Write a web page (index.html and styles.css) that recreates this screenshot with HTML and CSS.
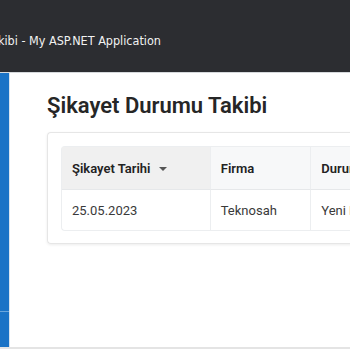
FILE: index.html
```html
<!DOCTYPE html>
<html lang="tr">
<head>
    <meta charset="UTF-8">
    <meta name="viewport" content="width=device-width, initial-scale=1.0">
    <title>Şikayet Durumu Takibi - My ASP.NET Application</title>
    <link rel="stylesheet" href="styles.css">
</head>
<body>

    <header class="topbar">
        <div class="brand">
            <span class="brand-text">Şikayet Durumu Takibi - My ASP.NET Application</span>
        </div>
    </header>

    <div class="page">
        <aside class="sidebar">
            <div class="sidebar-top"></div>
            <div class="sidebar-bottom"></div>
        </aside>

        <main class="content">
            <h1 class="title">Şikayet Durumu Takibi</h1>

            <div class="card">
                <table class="grid">
                    <thead>
                        <tr>
                            <th class="col-date sorted">Şikayet Tarihi <span class="caret"></span></th>
                            <th class="col-firm">Firma</th>
                            <th class="col-state">Durum</th>
                        </tr>
                    </thead>
                    <tbody>
                        <tr>
                            <td>25.05.2023</td>
                            <td>Teknosah</td>
                            <td>Yeni Kayıt</td>
                        </tr>
                    </tbody>
                </table>
            </div>
        </main>
    </div>

</body>
</html>
```

FILE: styles.css
```css
* {
    box-sizing: border-box;
    margin: 0;
    padding: 0;
}

body {
    font-family: 'Roboto', 'Liberation Sans', sans-serif;
    width: 350px;
    height: 350px;
    overflow: hidden;
    background-color: #fff;
    color: #333;
}

.topbar {
    height: 73px;
    background-color: #2c2d31;
    border-bottom: 1px solid #d6d9dc;
    display: flex;
    align-items: center;
}

.brand {
    width: 161px;
    display: flex;
    justify-content: flex-end;
    overflow: hidden;
    white-space: nowrap;
    margin-top: 9px;
}

.brand-text {
    font-family: 'DejaVu Sans Condensed', 'DejaVu Sans', sans-serif;
    font-stretch: condensed;
    font-size: 12.5px;
    color: #f2f2f2;
}

.page {
    display: flex;
    height: 276px;
    border-bottom: 2px solid #e4e4e4;
}

.sidebar {
    width: 10px;
    display: flex;
    flex-direction: column;
    background-color: #1a73c6;
    border-right: 1px solid #d8e4ef;
}

.sidebar-top {
    height: 239px;
    border-bottom: 1px solid #6aa6dc;
}

.content {
    flex: 1;
    padding: 20px 0 0 37px;
    overflow: hidden;
}

.title {
    font-size: 22px;
    font-weight: 600;
    color: #262626;
    line-height: 26px;
    margin-bottom: 13px;
}

.card {
    width: 340px;
    border: 1px solid #e6e6e6;
    border-right: none;
    border-radius: 4px 0 0 4px;
    box-shadow: 0 1px 3px rgba(0, 0, 0, 0.08);
    padding: 13px 0 12px 13px;
}

.grid {
    border-collapse: separate;
    border-spacing: 0;
    border: 1px solid #eceef0;
    border-right: none;
    border-radius: 4px 0 0 4px;
    width: 400px;
    table-layout: fixed;
    font-size: 13px;
}

.grid th, .grid td {
    text-align: left;
    padding: 0 10px;
    white-space: nowrap;
    overflow: hidden;
    border-left: 1px solid #eceef0;
}

.grid th:first-child, .grid td:first-child {
    border-left: none;
}

.grid th {
    height: 43px;
    font-weight: 600;
    color: #222;
    background-color: #f7f8f9;
    border-bottom: 1px solid #e6e8ea;
}

.grid th.sorted {
    background-color: #f0f0f0;
}

.grid td {
    height: 40px;
    color: #3a3a3a;
}

.col-date {
    width: 147px;
}

.col-firm {
    width: 100px;
}

.col-state {
    width: 150px;
}

.caret {
    display: inline-block;
    width: 0;
    height: 0;
    margin-left: 5px;
    vertical-align: middle;
    border-left: 4px solid transparent;
    border-right: 4px solid transparent;
    border-top: 4px solid #555;
}
```
